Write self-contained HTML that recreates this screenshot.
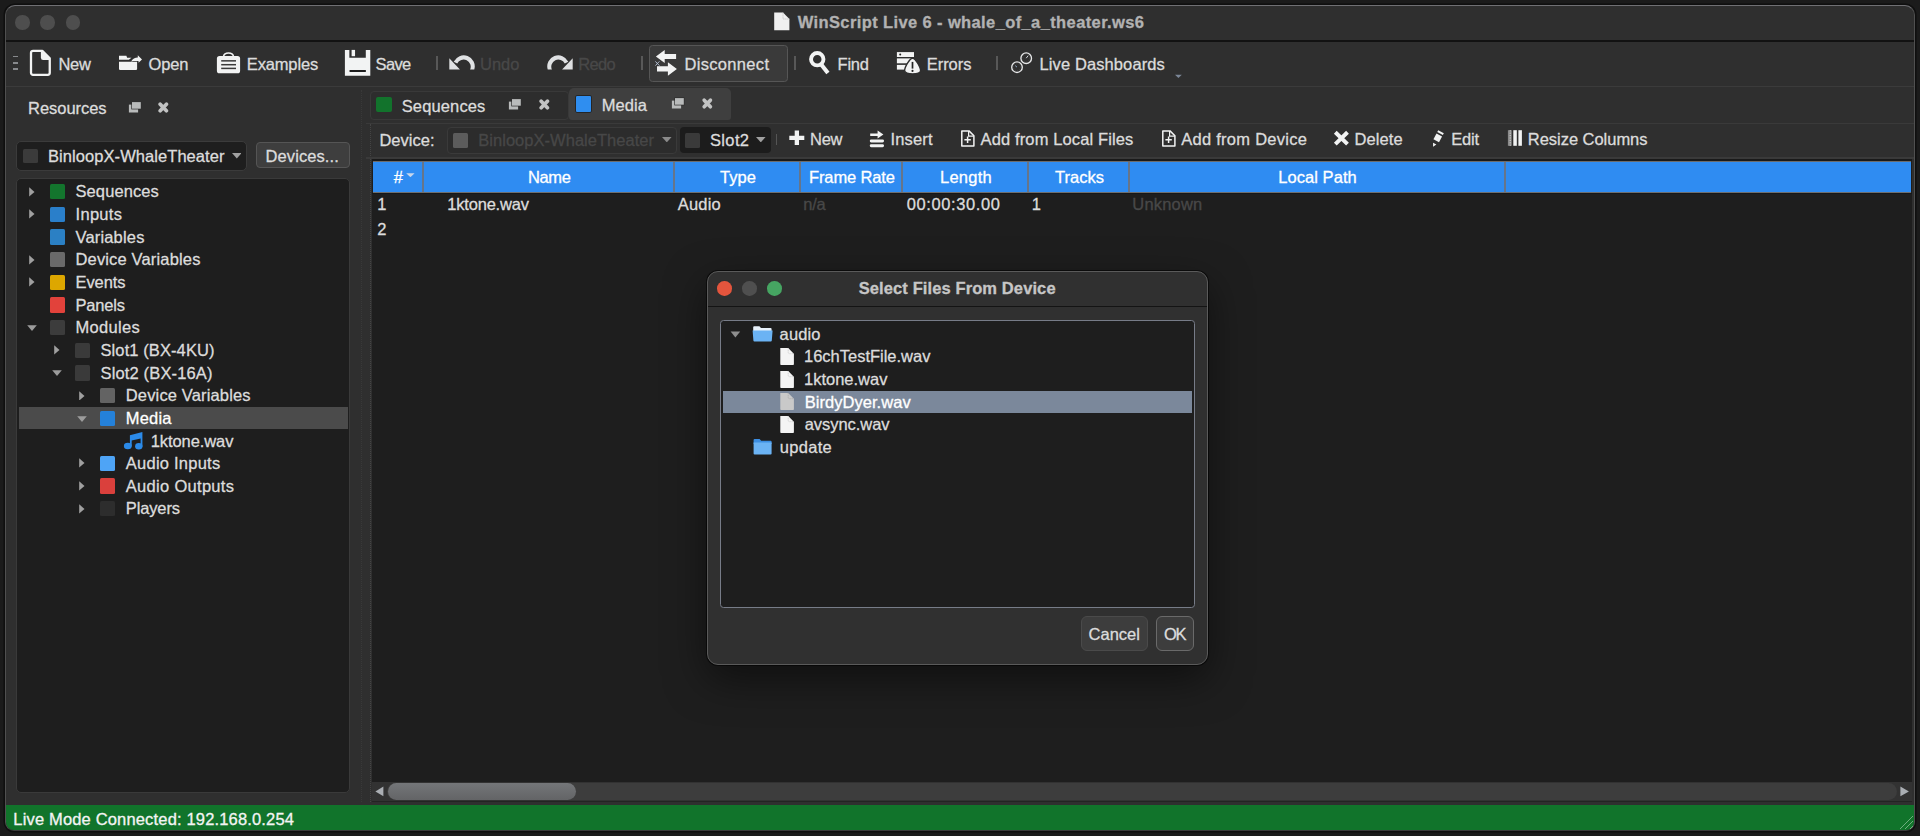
<!DOCTYPE html>
<html><head><meta charset="utf-8"><title>WinScript Live 6</title>
<style>
html,body{margin:0;padding:0;}
body{width:1920px;height:836px;overflow:hidden;background:#1b1b1b;font-family:"Liberation Sans",sans-serif;font-size:16.5px;line-height:20.0px;position:relative;}
div,span,svg{position:absolute;box-sizing:border-box;}
span{white-space:pre;z-index:2;-webkit-text-stroke:0.3px currentColor;}
</style></head><body>
<div style="left:5px;top:5px;width:1910px;height:826px;background:#2f2f2f;border-radius:10px 10px 9px 9px;border:1px solid #505050;border-top-color:#707074;border-bottom-color:#3c3c3c;box-shadow:0 0 0 1.5px #0f0f0f;overflow:hidden"><div style="left:0;top:34.3px;width:1910px;height:1.4px;background:#121212"></div><div style="left:0;top:79.5px;width:1910px;height:1.5px;background:#3b3b3b"></div><div style="left:0;top:798.6px;width:1910px;height:27.4px;background:#11742b;border-bottom:1.3px solid #4ba061"></div></div>
<div style="left:15.2px;top:15.2px;width:14.4px;height:14.4px;background:#4e4e4e;border-radius:50%;"></div>
<div style="left:40.3px;top:15.2px;width:14.4px;height:14.4px;background:#4e4e4e;border-radius:50%;"></div>
<div style="left:65.5px;top:15.2px;width:14.4px;height:14.4px;background:#4e4e4e;border-radius:50%;"></div>
<div style="left:16.4px;top:141px;width:230.8px;height:30px;background:#1e1e1e;border-radius:5px;border:1.6px solid #3b3b3b;"></div>
<div style="left:23px;top:148.5px;width:14.5px;height:14.5px;background:#3b3b3b;border-radius:1.5px;"></div>
<div style="left:256px;top:141.5px;width:93.5px;height:26.5px;background:#3e3e3e;border-radius:4px;border:1px solid #555;"></div>
<div style="left:16.4px;top:178.3px;width:333.8px;height:615px;background:#1e1e1e;border-radius:5px;border:1.6px solid #3a3a3a;"></div>
<div style="left:18.7px;top:406.8px;width:329.6px;height:22.5px;background:#4b4b4b;"></div>
<div style="left:361.2px;top:90px;width:1px;height:712px;border-left:1px dotted #393939;"></div>
<div style="left:370px;top:124px;width:1px;height:678px;border-left:1px dotted #444;"></div>
<div style="left:369.5px;top:91px;width:199.5px;height:29px;background:#2d2d2d;border-radius:4px;border:1px solid #393939;"></div>
<div style="left:569px;top:87.5px;width:162px;height:32.5px;background:#3f3f3f;border-radius:5px 5px 3px 3px;"></div>
<div style="left:366px;top:122.5px;width:1548px;height:1.5px;background:#3a3a3a;"></div>
<div style="left:446.8px;top:126.9px;width:230px;height:27.2px;background:#2c2c2c;border-radius:4px;border:1px solid #3a3a3a;"></div>
<div style="left:679.8px;top:126.7px;width:91px;height:26.3px;background:#1c1c1c;border-radius:4px;"></div>
<div style="left:776px;top:134px;width:1.2px;height:10.5px;background:#555;"></div>
<div style="left:366px;top:157px;width:1548px;height:1.5px;background:#3a3a3a;"></div>
<div style="left:372.3px;top:159.5px;width:1539.4px;height:642px;background:#1e1e1e;"></div>
<div style="left:372px;top:159.3px;width:1539.7px;height:1.4px;background:#1a1a1a;"></div>
<div style="left:373.2px;top:160.6px;width:1538px;height:1px;background:#6c6c6c;"></div>
<div style="left:373.3px;top:161.5px;width:1537.8px;height:30.8px;background:#2f8cf2;"></div>
<div style="left:373.3px;top:192.3px;width:1537.8px;height:1px;background:#6e6e6e;"></div>
<div style="left:372px;top:193.3px;width:1539.7px;height:1.2px;background:#171717;"></div>
<div style="left:422px;top:161.5px;width:2px;height:30.5px;background:#66758a;"></div>
<div style="left:673px;top:161.5px;width:2px;height:30.5px;background:#66758a;"></div>
<div style="left:799px;top:161.5px;width:2px;height:30.5px;background:#66758a;"></div>
<div style="left:901.3px;top:161.5px;width:2px;height:30.5px;background:#66758a;"></div>
<div style="left:1027px;top:161.5px;width:2px;height:30.5px;background:#66758a;"></div>
<div style="left:1128px;top:161.5px;width:2px;height:30.5px;background:#66758a;"></div>
<div style="left:1504px;top:161.5px;width:2px;height:30.5px;background:#66758a;"></div>
<div style="left:372px;top:782px;width:1539.7px;height:19.3px;background:#323232;"></div>
<div style="left:372px;top:801.2px;width:1539.7px;height:1px;background:#232323;"></div>
<div style="left:386.5px;top:782.8px;width:1510px;height:17.6px;background:#3d3d3d;border-radius:9px;"></div>
<div style="left:387.8px;top:782.8px;width:188.4px;height:17.5px;border-radius:8.8px;background:linear-gradient(#747679,#636466);"></div>
<div style="left:707px;top:271px;width:501px;height:394px;background:#303030;border-radius:11px;border:1px solid #5a5a5a;box-shadow:0 14px 40px rgba(0,0,0,.5),0 0 0 1px rgba(0,0,0,.55);overflow:hidden"><div style="left:0;top:34.4px;width:500px;height:1.1px;background:#141414"></div></div>
<div style="left:717.0px;top:281.3px;width:14.6px;height:14.6px;background:#e4553d;border-radius:50%;"></div>
<div style="left:742.0px;top:281.3px;width:14.6px;height:14.6px;background:#4f4f4f;border-radius:50%;"></div>
<div style="left:767.1px;top:281.3px;width:14.6px;height:14.6px;background:#46a562;border-radius:50%;"></div>
<div style="left:720.4px;top:320.2px;width:474.6px;height:288.2px;background:#1e1e1e;border:1.8px solid #777c88;border-radius:3.5px;"></div>
<div style="left:723.2px;top:390.5px;width:469px;height:22.3px;background:#7b889b;"></div>
<div style="left:1081px;top:616px;width:67px;height:35.2px;background:#3d3d3d;border-radius:6px;border:1px solid #4a4a4a;"></div>
<div style="left:1156px;top:616px;width:38.4px;height:35.2px;background:#3d3d3d;border-radius:6px;border:1px solid #6a6a6a;"></div>
<span style="left:797.70px;top:12.48px;color:#b2b2b2;font-weight:700;letter-spacing:0.385px;">WinScript Live 6 - whale_of_a_theater.ws6</span>
<span style="left:58.40px;top:53.88px;color:#dcdcdc;letter-spacing:-0.258px;">New</span>
<span style="left:148.60px;top:53.88px;color:#dcdcdc;letter-spacing:-0.158px;">Open</span>
<span style="left:246.80px;top:53.88px;color:#dcdcdc;letter-spacing:-0.150px;">Examples</span>
<span style="left:375.60px;top:53.88px;color:#dcdcdc;letter-spacing:-0.670px;">Save</span>
<span style="left:480.00px;top:53.88px;color:#484848;letter-spacing:0.016px;">Undo</span>
<span style="left:578.30px;top:53.88px;color:#484848;letter-spacing:-0.684px;">Redo</span>
<span style="left:684.40px;top:53.88px;color:#dcdcdc;letter-spacing:0.331px;">Disconnect</span>
<span style="left:837.60px;top:53.88px;color:#dcdcdc;letter-spacing:-0.270px;">Find</span>
<span style="left:926.70px;top:53.88px;color:#dcdcdc;letter-spacing:-0.024px;">Errors</span>
<span style="left:1039.50px;top:53.88px;color:#dcdcdc;letter-spacing:0.105px;">Live Dashboards</span>
<span style="left:28.10px;top:97.98px;color:#dcdcdc;letter-spacing:-0.047px;">Resources</span>
<span style="left:48.00px;top:146.48px;color:#dcdcdc;letter-spacing:0.066px;">BinloopX-WhaleTheater</span>
<span style="left:265.60px;top:146.08px;color:#dcdcdc;letter-spacing:0.085px;">Devices...</span>
<span style="left:401.70px;top:96.38px;color:#dcdcdc;letter-spacing:0.140px;">Sequences</span>
<span style="left:601.70px;top:94.78px;color:#dcdcdc;letter-spacing:0.087px;">Media</span>
<span style="left:379.40px;top:129.98px;color:#dcdcdc;letter-spacing:0.028px;">Device:</span>
<span style="left:478.30px;top:129.78px;color:#474747;letter-spacing:0.026px;">BinloopX-WhaleTheater</span>
<span style="left:710.00px;top:129.78px;color:#dcdcdc;letter-spacing:0.348px;">Slot2</span>
<span style="left:810.00px;top:129.08px;color:#dcdcdc;letter-spacing:-0.258px;">New</span>
<span style="left:890.40px;top:129.08px;color:#dcdcdc;letter-spacing:0.184px;">Insert</span>
<span style="left:980.60px;top:129.08px;color:#dcdcdc;letter-spacing:0.121px;">Add from Local Files</span>
<span style="left:1181.30px;top:129.08px;color:#dcdcdc;letter-spacing:0.259px;">Add from Device</span>
<span style="left:1354.40px;top:129.08px;color:#dcdcdc;letter-spacing:0.119px;">Delete</span>
<span style="left:1451.20px;top:129.08px;color:#dcdcdc;letter-spacing:-0.146px;">Edit</span>
<span style="left:1527.80px;top:129.08px;color:#dcdcdc;letter-spacing:-0.033px;">Resize Columns</span>
<span style="left:393.75px;top:167.18px;color:#ffffff;">#</span>
<span style="left:527.90px;top:167.18px;color:#ffffff;letter-spacing:-0.305px;">Name</span>
<span style="left:720.00px;top:167.18px;color:#ffffff;letter-spacing:0.073px;">Type</span>
<span style="left:809.00px;top:167.18px;color:#ffffff;letter-spacing:-0.123px;">Frame Rate</span>
<span style="left:940.00px;top:167.18px;color:#ffffff;letter-spacing:0.246px;">Length</span>
<span style="left:1055.00px;top:167.18px;color:#ffffff;letter-spacing:0.022px;">Tracks</span>
<span style="left:1278.30px;top:167.18px;color:#ffffff;letter-spacing:0.046px;">Local Path</span>
<span style="left:377.20px;top:194.28px;color:#dcdcdc;">1</span>
<span style="left:447.20px;top:194.28px;color:#dcdcdc;letter-spacing:-0.185px;">1ktone.wav</span>
<span style="left:677.70px;top:194.28px;color:#dcdcdc;letter-spacing:0.199px;">Audio</span>
<span style="left:803.30px;top:194.28px;color:#484848;letter-spacing:-0.269px;">n/a</span>
<span style="left:906.70px;top:194.28px;color:#dcdcdc;letter-spacing:0.613px;">00:00:30.00</span>
<span style="left:1031.70px;top:194.28px;color:#dcdcdc;">1</span>
<span style="left:1132.30px;top:194.28px;color:#484848;letter-spacing:0.201px;">Unknown</span>
<span style="left:377.20px;top:219.28px;color:#dcdcdc;">2</span>
<span style="left:75.50px;top:181.48px;color:#dcdcdc;letter-spacing:0.090px;">Sequences</span>
<span style="left:75.50px;top:204.12px;color:#dcdcdc;letter-spacing:0.309px;">Inputs</span>
<span style="left:75.50px;top:226.76px;color:#dcdcdc;letter-spacing:0.165px;">Variables</span>
<span style="left:75.50px;top:249.40px;color:#dcdcdc;letter-spacing:0.154px;">Device Variables</span>
<span style="left:75.50px;top:272.04px;color:#dcdcdc;letter-spacing:-0.091px;">Events</span>
<span style="left:75.50px;top:294.68px;color:#dcdcdc;letter-spacing:-0.211px;">Panels</span>
<span style="left:75.50px;top:317.32px;color:#dcdcdc;letter-spacing:0.321px;">Modules</span>
<span style="left:100.50px;top:339.96px;color:#dcdcdc;letter-spacing:0.093px;">Slot1 (BX-4KU)</span>
<span style="left:100.50px;top:362.60px;color:#dcdcdc;letter-spacing:0.150px;">Slot2 (BX-16A)</span>
<span style="left:125.80px;top:385.24px;color:#dcdcdc;letter-spacing:0.147px;">Device Variables</span>
<span style="left:125.80px;top:407.88px;color:#ffffff;letter-spacing:0.162px;">Media</span>
<span style="left:150.70px;top:430.52px;color:#dcdcdc;letter-spacing:-0.085px;">1ktone.wav</span>
<span style="left:125.80px;top:453.16px;color:#dcdcdc;letter-spacing:0.242px;">Audio Inputs</span>
<span style="left:125.80px;top:475.80px;color:#dcdcdc;letter-spacing:0.302px;">Audio Outputs</span>
<span style="left:125.80px;top:498.44px;color:#dcdcdc;letter-spacing:-0.139px;">Players</span>
<span style="left:13.30px;top:809.28px;color:#f4f4f4;letter-spacing:0.166px;">Live Mode Connected: 192.168.0.254</span>
<span style="left:858.70px;top:278.08px;color:#c6c6c6;font-weight:700;letter-spacing:0.107px;">Select Files From Device</span>
<span style="left:779.60px;top:323.58px;color:#dcdcdc;letter-spacing:0.106px;">audio</span>
<span style="left:804.00px;top:346.22px;color:#dcdcdc;letter-spacing:-0.011px;">16chTestFile.wav</span>
<span style="left:804.00px;top:368.86px;color:#dcdcdc;letter-spacing:-0.008px;">1ktone.wav</span>
<span style="left:804.70px;top:391.50px;color:#ffffff;letter-spacing:0.046px;">BirdyDyer.wav</span>
<span style="left:804.70px;top:414.14px;color:#dcdcdc;letter-spacing:-0.042px;">avsync.wav</span>
<span style="left:779.70px;top:436.78px;color:#dcdcdc;letter-spacing:0.326px;">update</span>
<span style="left:1088.50px;top:624.38px;color:#dcdcdc;letter-spacing:0.025px;">Cancel</span>
<span style="left:1163.90px;top:624.38px;color:#dcdcdc;letter-spacing:-1.200px;">OK</span>
<svg style="left:772px;top:11px" width="20" height="22" viewBox="0 0 20 22"><path d="M2.2,1.6 H11 L17.4,8 V19.2 H2.2 z" fill="#f0f0f0"/><path d="M11,1.6 V8 H17.4" fill="none" stroke="#bdbdbd" stroke-width="1" stroke-dasharray="1 1"/></svg>
<div style="left:13px;top:55.55px;width:4.9px;height:1.9px;background:#87898c;"></div>
<div style="left:13px;top:62.05px;width:4.9px;height:1.9px;background:#87898c;"></div>
<div style="left:13px;top:68.45px;width:4.9px;height:1.9px;background:#87898c;"></div>
<svg style="left:28px;top:48px" width="25" height="30" viewBox="0 0 25 30"><path d="M5,2.8 H14.3 L21.75,10.2 V24.8 a2,2 0 0 1 -2,2 H5 a2,2 0 0 1 -2,-2 V4.8 a2,2 0 0 1 2,-2 z" fill="none" stroke="#f2f3f3" stroke-width="2.3" stroke-linejoin="round"/><path d="M12.9,2.8 V9.7 a2.3,2.3 0 0 0 2.3,2.3 H21.75 V10.2 L14.3,2.8 z" fill="#f2f3f3"/></svg>
<svg style="left:118px;top:54px" width="26" height="18" viewBox="0 0 26 18"><path d="M1,1.7 H8.4 L9.1,3.7 H13.4 L10.9,5.85 H1 z" fill="#f2f3f3"/><path d="M1,7.8 H19.1 V15.1 a0.8,0.8 0 0 1 -0.8,0.8 H1.8 a0.8,0.8 0 0 1 -0.8,-0.8 z" fill="#f2f3f3"/><path d="M13.1,7.4 C14.5,4.9 17,3.5 19.8,3.4 V1.2 L24,5.5 L20.5,8.8 V7.1 C17.8,6.9 15.2,7.0 13.1,7.4 z" fill="#f2f3f3"/></svg>
<svg style="left:214px;top:50px" width="28" height="26" viewBox="0 0 28 26"><path d="M9.4,6.6 C10.4,1.9 18.6,1.9 19.6,6.6" fill="none" stroke="#f2f3f3" stroke-width="1.5"/><rect x="2.9" y="6" width="23.2" height="17.3" rx="2.6" fill="#f2f3f3"/><rect x="7.2" y="10.1" width="14.8" height="1.5" fill="#3a3a3a"/><rect x="7.2" y="13.95" width="14.8" height="1.5" fill="#3a3a3a"/><rect x="7.2" y="17.65" width="14.8" height="1.5" fill="#3a3a3a"/></svg>
<svg style="left:344px;top:49px" width="28" height="28" viewBox="0 0 28 28"><path d="M0.9,0.9 H5.35 V8.8 H21.8 V0.9 H26.3 V26.7 H0.9 z" fill="#f2f3f3"/><rect x="7.6" y="0.9" width="3.45" height="6.3" fill="#f2f3f3"/><rect x="5.55" y="21" width="16.3" height="2" fill="#1d1d1d"/></svg>
<div style="left:436.1px;top:55.9px;width:1.6px;height:13.7px;background:#585858;"></div>
<div style="left:641px;top:55.9px;width:1.6px;height:13.7px;background:#585858;"></div>
<div style="left:794.1px;top:55.9px;width:1.6px;height:13.7px;background:#585858;"></div>
<div style="left:996.2px;top:55.9px;width:1.6px;height:13.7px;background:#585858;"></div>
<svg style="left:447px;top:53px" width="30" height="19" viewBox="0 0 30 19"><g fill="#dfe1e3"><path d="M27.28,16.6 A11.05,11.05 0 0 0 6.69,8.73 L10.22,10.38 A7.15,7.15 0 0 1 23.09,16.6 z"/><path d="M2.3,5.2 V16.6 H12.9 z"/></g></svg>
<svg style="left:544.9px;top:53px" width="30" height="19" viewBox="0 0 30 19"><g transform="translate(30,0) scale(-1,1)" fill="#dfe1e3"><path d="M27.28,16.6 A11.05,11.05 0 0 0 6.69,8.73 L10.22,10.38 A7.15,7.15 0 0 1 23.09,16.6 z"/><path d="M2.3,5.2 V16.6 H12.9 z"/></g></svg>
<div style="left:649px;top:45px;width:139.3px;height:36.8px;background:#3a3a3a;border-radius:3.5px;border:1px solid #565656;"></div>
<svg style="left:653px;top:48px" width="28" height="30" viewBox="0 0 28 30"><path d="M2.9,8.6 L11.7,2.1 V5.9 H23.1 V11 H11.7 V15.1 z" fill="#f2f3f3"/><path d="M23.9,21 L14.9,14.3 V18.3 H4 V23.6 H14.9 V27.7 z" fill="#f2f3f3"/><path d="M2.4,13.4 L6.4,17.6 M6.4,13.4 L2.4,17.6" stroke="#b9c6da" stroke-width="0.9"/></svg>
<svg style="left:806px;top:48px" width="26" height="28" viewBox="0 0 26 28"><circle cx="11.25" cy="11.2" r="6.2" fill="none" stroke="#f2f3f3" stroke-width="3.9"/><path d="M15.6,16.9 L21.9,25" stroke="#f2f3f3" stroke-width="4.1"/></svg>
<svg style="left:895px;top:50px" width="28" height="26" viewBox="0 0 28 26"><rect x="1.9" y="2.1" width="17.1" height="4.9" fill="#f2f3f3"/><circle cx="5.2" cy="4.55" r="1" fill="#222"/><rect x="1.9" y="8.4" width="17.1" height="4.9" fill="#f2f3f3"/><rect x="1.9" y="14.9" width="17.1" height="4.7" fill="#f2f3f3"/><path d="M17.6,8.2 C20,8 25.6,16.5 25.6,20.6 C25.6,25 9.6,25 9.6,20.6 C9.6,16.5 15.2,8 17.6,8.2 z" fill="#f2f3f3" stroke="#2f2f2f" stroke-width="1.4"/><path d="M17.5,11.9 V18.6" stroke="#222" stroke-width="1.7"/><circle cx="17.5" cy="20.9" r="1.05" fill="#222"/></svg>
<svg style="left:1009px;top:50px" width="26" height="26" viewBox="0 0 26 26"><circle cx="8" cy="17.15" r="5.3" fill="none" stroke="#e6e7e8" stroke-width="1.35"/><circle cx="17.2" cy="8.2" r="5.3" fill="none" stroke="#e6e7e8" stroke-width="1.35"/><path d="M8,17.15 L6.2,15.6" stroke="#8fa4c0" stroke-width="1"/><path d="M17.2,8.2 L19.2,5.6" stroke="#d0d4da" stroke-width="1"/><circle cx="8" cy="17.15" r="3.5" fill="none" stroke="#4a4a4a" stroke-width="0.8" stroke-dasharray="1 1.2"/><circle cx="17.2" cy="8.2" r="3.5" fill="none" stroke="#4a4a4a" stroke-width="0.8" stroke-dasharray="1 1.2"/></svg>
<svg style="left:1174px;top:74px" width="9" height="5" viewBox="0 0 9 5"><path d="M1,0.8 H7.8 L4.4,4 z" fill="#7c8798"/></svg>
<svg style="left:128px;top:101.3px" width="14" height="13" viewBox="0 0 14 13"><rect x="0.9" y="3.6" width="9.2" height="7.9" fill="#b9bbbb"/><rect x="3.3" y="0.3" width="10.2" height="8.1" fill="#2f2f2f"/><rect x="4" y="1.1" width="8.8" height="6.6" fill="#b9bbbb"/></svg>
<svg style="left:157.4px;top:100.8px" width="12.4" height="12.4" viewBox="0 0 12.4 12.4"><path d="M3.2,3.2 L9.4,9.700000000000001 M9.4,3.2 L3.2,9.700000000000001" stroke="#c2c3c3" stroke-width="3.7" stroke-linecap="round"/></svg>
<svg style="left:508.2px;top:97.6px" width="14" height="13" viewBox="0 0 14 13"><rect x="0.9" y="3.6" width="9.2" height="7.9" fill="#b9bbbb"/><rect x="3.3" y="0.3" width="10.2" height="8.1" fill="#2f2f2f"/><rect x="4" y="1.1" width="8.8" height="6.6" fill="#b9bbbb"/></svg>
<svg style="left:537.6px;top:97.6px" width="12.4" height="12.4" viewBox="0 0 12.4 12.4"><path d="M3.2,3.2 L9.4,9.700000000000001 M9.4,3.2 L3.2,9.700000000000001" stroke="#c2c3c3" stroke-width="3.7" stroke-linecap="round"/></svg>
<svg style="left:671.2px;top:97.3px" width="14" height="13" viewBox="0 0 14 13"><rect x="0.9" y="3.6" width="9.2" height="7.9" fill="#b9bbbb"/><rect x="3.3" y="0.3" width="10.2" height="8.1" fill="#2f2f2f"/><rect x="4" y="1.1" width="8.8" height="6.6" fill="#b9bbbb"/></svg>
<svg style="left:701.2px;top:97.2px" width="12.4" height="12.4" viewBox="0 0 12.4 12.4"><path d="M3.2,3.2 L9.4,9.700000000000001 M9.4,3.2 L3.2,9.700000000000001" stroke="#c2c3c3" stroke-width="3.7" stroke-linecap="round"/></svg>
<svg style="left:231.8px;top:153.2px" width="9.6" height="5.4" viewBox="0 0 9.6 5.4"><path d="M0,0 H9.6 L4.8,5.4 z" fill="#a0a0a0"/></svg>
<svg style="left:662.4px;top:137px" width="9.6" height="5.4" viewBox="0 0 9.6 5.4"><path d="M0,0 H9.6 L4.8,5.4 z" fill="#8a8a8a"/></svg>
<svg style="left:756.4px;top:137px" width="9.6" height="5.4" viewBox="0 0 9.6 5.4"><path d="M0,0 H9.6 L4.8,5.4 z" fill="#a0a0a0"/></svg>
<div style="left:452.8px;top:132.5px;width:15.3px;height:15.3px;background:#5c5c5c;border-radius:1.5px;"></div>
<div style="left:685px;top:132.5px;width:15px;height:15px;background:#3a3a3a;border-radius:1.5px;"></div>
<div style="left:376.2px;top:96.9px;width:15.6px;height:14.8px;background:#12732c;border-radius:2px;"></div>
<div style="left:574.8px;top:95.2px;width:17.6px;height:17.6px;background:#2f8ef0;border-radius:2px;border:1.6px solid #262626;"></div>
<div style="left:50.2px;top:184.1px;width:15.3px;height:15.3px;background:#13752d;border-radius:1.5px;"></div>
<svg style="left:28.7px;top:186.79999999999998px" width="6" height="9.8" viewBox="0 0 6 9.8"><path d="M0.2,0.2 L5.5,4.9 L0.2,9.6 z" fill="#a0a0a0"/></svg>
<div style="left:50.2px;top:206.73999999999998px;width:15.3px;height:15.3px;background:#2a7fca;border-radius:1.5px;"></div>
<svg style="left:28.7px;top:209.43999999999997px" width="6" height="9.8" viewBox="0 0 6 9.8"><path d="M0.2,0.2 L5.5,4.9 L0.2,9.6 z" fill="#a0a0a0"/></svg>
<div style="left:50.2px;top:229.38px;width:15.3px;height:15.3px;background:#2b80c4;border-radius:1.5px;"></div>
<div style="left:50.2px;top:252.02px;width:15.3px;height:15.3px;background:#6a6a6a;border-radius:1.5px;"></div>
<svg style="left:28.7px;top:254.72px" width="6" height="9.8" viewBox="0 0 6 9.8"><path d="M0.2,0.2 L5.5,4.9 L0.2,9.6 z" fill="#a0a0a0"/></svg>
<div style="left:50.2px;top:274.65999999999997px;width:15.3px;height:15.3px;background:#dda700;border-radius:1.5px;"></div>
<svg style="left:28.7px;top:277.36px" width="6" height="9.8" viewBox="0 0 6 9.8"><path d="M0.2,0.2 L5.5,4.9 L0.2,9.6 z" fill="#a0a0a0"/></svg>
<div style="left:50.2px;top:297.29999999999995px;width:15.3px;height:15.3px;background:#e2423b;border-radius:1.5px;"></div>
<div style="left:50.2px;top:319.93999999999994px;width:15.3px;height:15.3px;background:#3c3c3c;border-radius:1.5px;"></div>
<svg style="left:26.7px;top:324.93999999999994px" width="10" height="6.2" viewBox="0 0 10 6.2"><path d="M0.2,0.2 H9.8 L5,6 z" fill="#9c9c9c"/></svg>
<div style="left:75.2px;top:342.58px;width:15.3px;height:15.3px;background:#3a3a3a;border-radius:1.5px;"></div>
<svg style="left:54px;top:345.28000000000003px" width="6" height="9.8" viewBox="0 0 6 9.8"><path d="M0.2,0.2 L5.5,4.9 L0.2,9.6 z" fill="#a0a0a0"/></svg>
<div style="left:75.2px;top:365.21999999999997px;width:15.3px;height:15.3px;background:#3a3a3a;border-radius:1.5px;"></div>
<svg style="left:52px;top:370.21999999999997px" width="10" height="6.2" viewBox="0 0 10 6.2"><path d="M0.2,0.2 H9.8 L5,6 z" fill="#9c9c9c"/></svg>
<div style="left:100.1px;top:387.85999999999996px;width:15.3px;height:15.3px;background:#636363;border-radius:1.5px;"></div>
<svg style="left:79.2px;top:390.56px" width="6" height="9.8" viewBox="0 0 6 9.8"><path d="M0.2,0.2 L5.5,4.9 L0.2,9.6 z" fill="#a0a0a0"/></svg>
<div style="left:100.1px;top:410.5px;width:15.3px;height:15.3px;background:#2481da;border-radius:1.5px;"></div>
<svg style="left:77.2px;top:415.5px" width="10" height="6.2" viewBox="0 0 10 6.2"><path d="M0.2,0.2 H9.8 L5,6 z" fill="#9c9c9c"/></svg>
<div style="left:100.1px;top:455.78px;width:15.3px;height:15.3px;background:#4ea4f6;border-radius:1.5px;"></div>
<svg style="left:79.2px;top:458.48px" width="6" height="9.8" viewBox="0 0 6 9.8"><path d="M0.2,0.2 L5.5,4.9 L0.2,9.6 z" fill="#a0a0a0"/></svg>
<div style="left:100.1px;top:478.41999999999996px;width:15.3px;height:15.3px;background:#da403c;border-radius:1.5px;"></div>
<svg style="left:79.2px;top:481.12px" width="6" height="9.8" viewBox="0 0 6 9.8"><path d="M0.2,0.2 L5.5,4.9 L0.2,9.6 z" fill="#a0a0a0"/></svg>
<div style="left:100.1px;top:501.06px;width:15.3px;height:15.3px;background:#2d2d2d;border-radius:1.5px;"></div>
<svg style="left:79.2px;top:503.76000000000005px" width="6" height="9.8" viewBox="0 0 6 9.8"><path d="M0.2,0.2 L5.5,4.9 L0.2,9.6 z" fill="#a0a0a0"/></svg>
<svg style="left:123px;top:431px" width="21" height="20" viewBox="0 0 21 20"><g fill="#2b8ae8"><ellipse cx="4.8" cy="15" rx="3.9" ry="3.2"/><ellipse cx="15.8" cy="15.3" rx="3.7" ry="3.2"/><path d="M6.9,15.4 V4.2 L19.4,0.9 V15.6 H17.6 V7.5 L8.7,9.4 V15.4 z"/></g></svg>
<svg style="left:788px;top:129px" width="18" height="18" viewBox="0 0 18 18"><path d="M8.85,1.4 V16.1 M1.3,8.85 H16.3" stroke="#f2f3f3" stroke-width="4.3"/></svg>
<svg style="left:868px;top:129px" width="18" height="20" viewBox="0 0 18 20"><path d="M2.2,4.4 H9.6 V1.6 L15.4,5.6 L9.6,9.6 V6.9 H2.2 z" fill="#f2f3f3"/><rect x="1.8" y="10.4" width="14.2" height="3" rx="1.4" fill="#f2f3f3"/><rect x="1.8" y="15.2" width="14.2" height="3" rx="1.4" fill="#f2f3f3"/></svg>
<svg style="left:960.2px;top:129px" width="16" height="19" viewBox="0 0 16 19"><path d="M1.8,1.9 H9 L13.9,6.8 V17 H1.8 z" fill="none" stroke="#f2f3f3" stroke-width="1.5" stroke-linejoin="round"/><path d="M8.6,1.9 V7.2 H13.9" fill="none" stroke="#f2f3f3" stroke-width="1.2"/><path d="M7.6,7.6 V14 M4.4,10.8 H10.8" stroke="#f2f3f3" stroke-width="1.5"/></svg>
<svg style="left:1161.2px;top:129px" width="16" height="19" viewBox="0 0 16 19"><path d="M1.8,1.9 H9 L13.9,6.8 V17 H1.8 z" fill="none" stroke="#f2f3f3" stroke-width="1.5" stroke-linejoin="round"/><path d="M8.6,1.9 V7.2 H13.9" fill="none" stroke="#f2f3f3" stroke-width="1.2"/><path d="M7.6,7.6 V14 M4.4,10.8 H10.8" stroke="#f2f3f3" stroke-width="1.5"/></svg>
<svg style="left:1332px;top:129px" width="19" height="18" viewBox="0 0 19 18"><path d="M3.3,3.3 L15.5,15.1 M15.5,3.3 L3.3,15.1" stroke="#f2f3f3" stroke-width="4"/></svg>
<svg style="left:1428px;top:126px" width="20" height="24" viewBox="0 0 20 24"><g transform="translate(9.75,11.9) rotate(28)"><rect x="-3.15" y="-7" width="6.3" height="2.1" fill="#f2f3f3"/><rect x="-3.15" y="-3.3" width="6.3" height="6.5" fill="#f2f3f3"/><path d="M-1.9,6.5 H1.9 L0,9.9 z" fill="#f2f3f3"/></g></svg>
<svg style="left:1507px;top:129px" width="16" height="18" viewBox="0 0 16 18"><rect x="0.9" y="1.2" width="3.8" height="15.6" fill="#8a8a8a"/><path d="M3.2,1.2 V16.8" stroke="#d8d8d8" stroke-width="1" stroke-dasharray="1.2 1.2"/><rect x="6.3" y="1.2" width="3.5" height="15.6" fill="#f2f3f3"/><rect x="11.4" y="1.2" width="3.5" height="15.6" fill="#f2f3f3"/></svg>
<svg style="left:405.5px;top:172.6px" width="9" height="4.4" viewBox="0 0 9 4.4"><path d="M0.2,0.2 H8.6 L4.4,4.2 z" fill="#c8d6ea"/></svg>
<svg style="left:374.6px;top:785.6px" width="9" height="11" viewBox="0 0 9 11"><path d="M8.4,0.5 V10.3 L0.4,5.4 z" fill="#aaaeb3"/></svg>
<svg style="left:1900.3px;top:785.6px" width="10" height="11" viewBox="0 0 10 11"><path d="M0.4,0.5 V10.3 L8.9,5.4 z" fill="#aaaeb3"/></svg>
<svg style="left:1898px;top:814px" width="16" height="16" viewBox="0 0 16 16"><path d="M15,2 L2,15 M15,7 L7,15 M15,12 L12,15" stroke="#6fae7e" stroke-width="1"/></svg>
<svg style="left:730.4px;top:331.1px" width="11" height="7" viewBox="0 0 11 7"><path d="M0.6,0.5 H10.2 L5.4,6.5 z" fill="#8e8e8e"/></svg>
<svg style="left:751.6px;top:325.2px" width="22" height="18" viewBox="0 0 22 18"><path d="M1.2,2.2 a1,1 0 0 1 1,-1 H7.4 L9,3 H18.6 a1,1 0 0 1 1,1 V6 H1.2 z" fill="#e8f1fb"/><path d="M0.6,5.6 H20.6 L19.8,15.6 a1,1 0 0 1 -1,0.9 H2.4 a1,1 0 0 1 -1,-0.9 z" fill="#6bb3f4"/></svg>
<svg style="left:751.6px;top:438px" width="22" height="18" viewBox="0 0 22 18"><path d="M1.6,2 a1,1 0 0 1 1,-1 H7.6 L9.2,2.8 H18.6 a1,1 0 0 1 1,1 V6 H1.6 z" fill="#3c8ee2"/><path d="M1.6,4.6 H19.6 V15.6 a1,1 0 0 1 -1,1 H2.6 a1,1 0 0 1 -1,-1 z" fill="#6bb3f4"/></svg>
<svg style="left:779px;top:347.2px" width="17" height="19" viewBox="0 0 17 19"><path d="M1.3,1 H9.2 L14.9,6.7 V17.3 a0.8,0.8 0 0 1 -0.8,0.8 H2.1 a0.8,0.8 0 0 1 -0.8,-0.8 z" fill="#f4f4f4"/><path d="M9.2,1 V5.5 a1.2,1.2 0 0 0 1.2,1.2 H14.9" fill="none" stroke="#c9c9c9" stroke-width="0.9" stroke-dasharray="1 0.8"/></svg>
<svg style="left:779px;top:369.84px" width="17" height="19" viewBox="0 0 17 19"><path d="M1.3,1 H9.2 L14.9,6.7 V17.3 a0.8,0.8 0 0 1 -0.8,0.8 H2.1 a0.8,0.8 0 0 1 -0.8,-0.8 z" fill="#f4f4f4"/><path d="M9.2,1 V5.5 a1.2,1.2 0 0 0 1.2,1.2 H14.9" fill="none" stroke="#c9c9c9" stroke-width="0.9" stroke-dasharray="1 0.8"/></svg>
<svg style="left:779px;top:392.48px" width="17" height="19" viewBox="0 0 17 19"><path d="M1.3,1 H9.2 L14.9,6.7 V17.3 a0.8,0.8 0 0 1 -0.8,0.8 H2.1 a0.8,0.8 0 0 1 -0.8,-0.8 z" fill="#c9c9c9"/><path d="M9.2,1 V5.5 a1.2,1.2 0 0 0 1.2,1.2 H14.9" fill="none" stroke="#a8a8a8" stroke-width="0.9" stroke-dasharray="1 0.8"/></svg>
<svg style="left:779px;top:415.12px" width="17" height="19" viewBox="0 0 17 19"><path d="M1.3,1 H9.2 L14.9,6.7 V17.3 a0.8,0.8 0 0 1 -0.8,0.8 H2.1 a0.8,0.8 0 0 1 -0.8,-0.8 z" fill="#f4f4f4"/><path d="M9.2,1 V5.5 a1.2,1.2 0 0 0 1.2,1.2 H14.9" fill="none" stroke="#c9c9c9" stroke-width="0.9" stroke-dasharray="1 0.8"/></svg>
</body></html>
